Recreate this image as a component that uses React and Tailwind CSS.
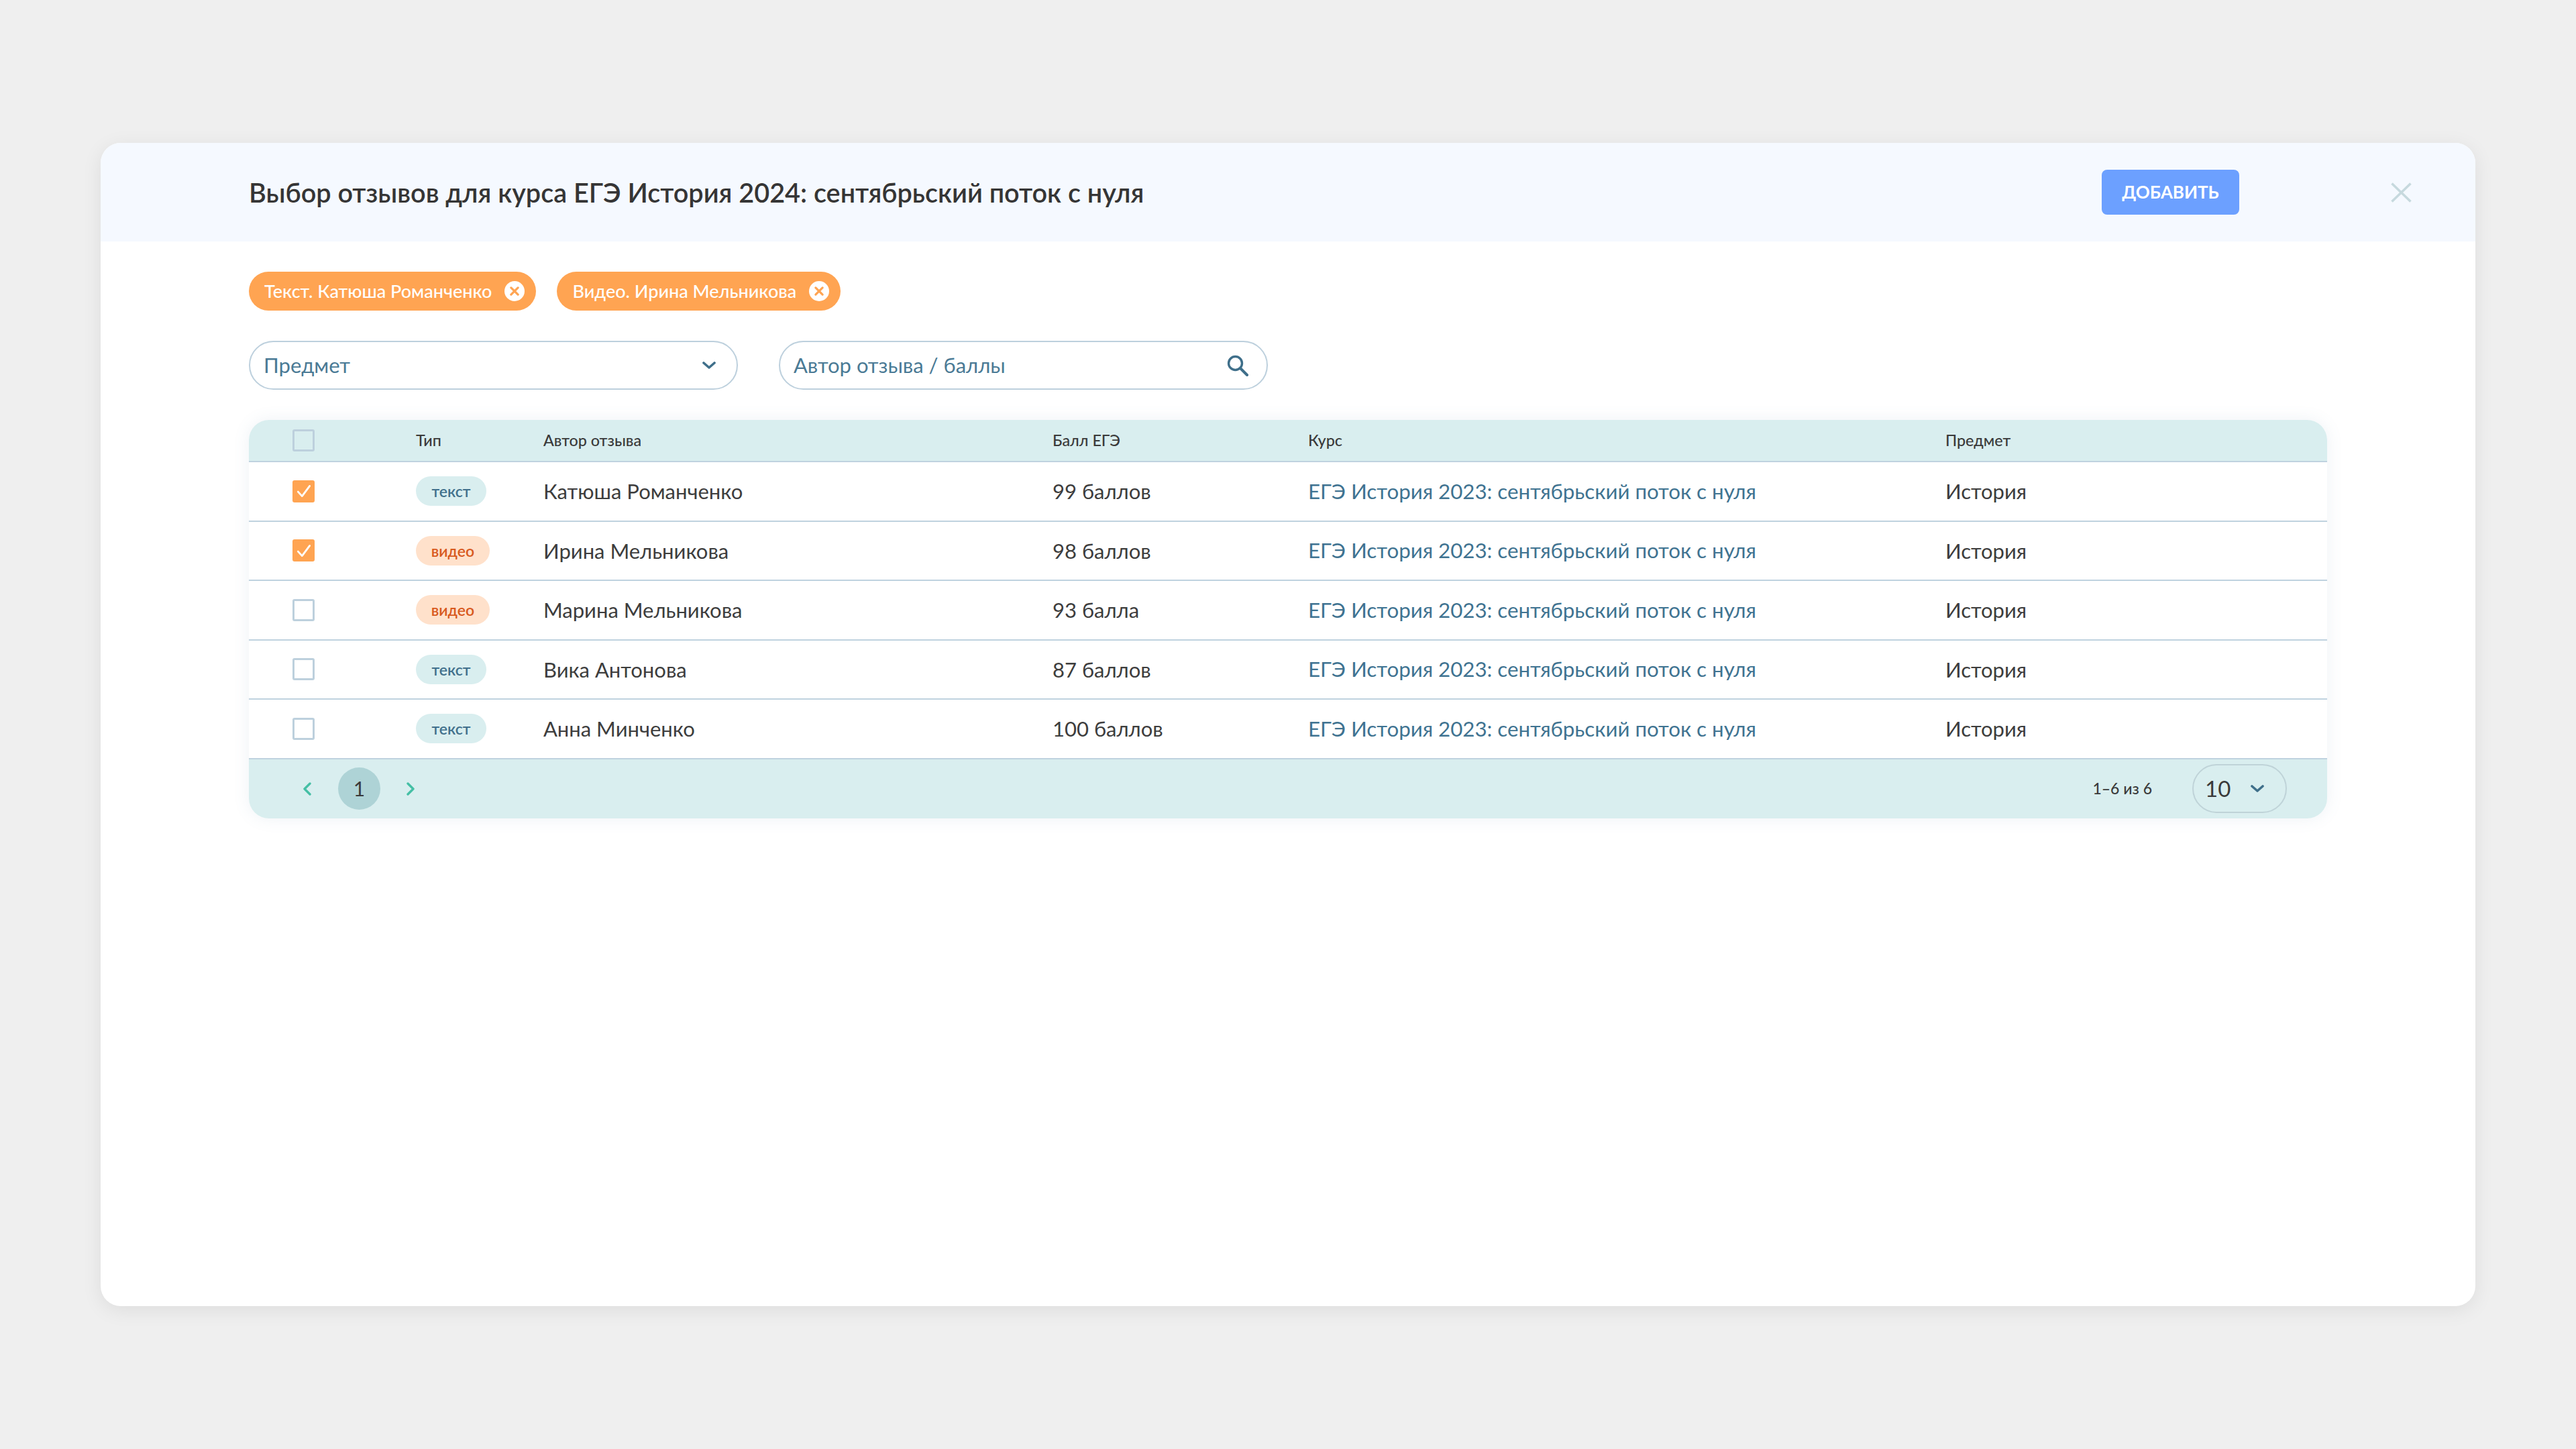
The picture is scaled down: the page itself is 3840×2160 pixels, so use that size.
const rows = [
  { checked: true, type: "текст", author: "Катюша Романченко", score: "99 баллов" },
  { checked: true, type: "видео", author: "Ирина Мельникова", score: "98 баллов" },
  { checked: false, type: "видео", author: "Марина Мельникова", score: "93 балла" },
  { checked: false, type: "текст", author: "Вика Антонова", score: "87 баллов" },
  { checked: false, type: "текст", author: "Анна Минченко", score: "100 баллов" },
];

const courseName = "ЕГЭ История 2023: сентябрьский поток с нуля";

const Chevron = ({ className }) => (
  <svg viewBox="0 0 20 11" fill="none" className={className}>
    <path d="M2 2l8 7 8-7" stroke="currentColor" strokeWidth="3.6" strokeLinecap="round" strokeLinejoin="round" />
  </svg>
);

const Checkbox = ({ checked, header }) => {
  if (checked) {
    return (
      <span className="flex h-[33px] w-[33px] items-center justify-center rounded-[3px] bg-[#ffa452]">
        <svg viewBox="0 0 24 24" fill="none" className="h-[26px] w-[26px]">
          <path d="M4 13l5.5 6L20 5" stroke="#fff" strokeWidth="2.6" strokeLinecap="round" strokeLinejoin="round" />
        </svg>
      </span>
    );
  }
  return (
    <span className={`block h-[33px] w-[33px] rounded-[3px] border-[3px] border-[#bdd0dd] ${header ? "bg-[#d9eeef]" : "bg-white"}`} />
  );
};

const Chip = ({ label }) => (
  <div className="flex h-[58px] items-center rounded-full bg-[#ffa452] pl-[23px] pr-[17px]">
    <span className="text-[27px] font-medium text-white">{label}</span>
    <span className="ml-[19px] flex h-[30px] w-[30px] items-center justify-center rounded-full bg-white">
      <svg viewBox="0 0 14 14" fill="none" className="h-[16px] w-[16px]">
        <path d="M2.5 2.5l9 9M11.5 2.5l-9 9" stroke="#ffa452" strokeWidth="2.8" strokeLinecap="round" />
      </svg>
    </span>
  </div>
);

const Row = ({ row }) => (
  <div className="flex h-[88.5px] items-center border-t-2 border-[#bfd2df] bg-white text-[31px] text-[#3d3d3d]">
    <div className="w-[249px] pl-[65px]">
      <Checkbox checked={row.checked} />
    </div>
    <div className="w-[190px]">
      {row.type === "текст" ? (
        <span className="flex h-[44px] w-[105px] items-center justify-center rounded-full bg-[#d9eeef] text-[23px] font-semibold text-[#41708c]">текст</span>
      ) : (
        <span className="flex h-[44px] w-[110px] items-center justify-center rounded-full bg-[#ffe1cb] text-[23px] font-semibold text-[#d8591e]">видео</span>
      )}
    </div>
    <div className="w-[759px]">{row.author}</div>
    <div className="w-[381px]">{row.score}</div>
    <div className="w-[950px] text-[31.25px] text-[#3f7391]">{courseName}</div>
    <div>История</div>
  </div>
);

export default function App() {
  return (
    <div className="h-[2160px] w-[3840px] bg-[#efefef] pl-[150px] pt-[213px] font-['Lato','Noto_Sans',sans-serif]">
      <div className="h-[1734px] w-[3540px] overflow-hidden rounded-[30px] bg-white shadow-[0_6px_30px_rgba(0,0,0,0.08)]">
        <header className="flex h-[147px] items-center bg-[#f5f9ff] pl-[221px]">
          <h1 className="w-[2762px] text-[39.6px] font-semibold text-[#353535]">
            Выбор отзывов для курса ЕГЭ История 2024: сентябрьский поток с нуля
          </h1>
          <button className="h-[67px] w-[205px] rounded-[8px] bg-[#6ca0ff] text-[26px] font-bold text-white">ДОБАВИТЬ</button>
          <svg viewBox="0 0 31 30" fill="none" className="ml-[226px] h-[30px] w-[31px]">
            <path d="M1.5 1.5l28 27M29.5 1.5l-28 27" stroke="#c6d9de" strokeWidth="3.6" />
          </svg>
        </header>

        <div className="px-[221px]">
          <div className="flex gap-[31px] pt-[45px]">
            <Chip label="Текст. Катюша Романченко" />
            <Chip label="Видео. Ирина Мельникова" />
          </div>

          <div className="mt-[45px] flex gap-[61px]">
            <div className="flex h-[73px] w-[729px] items-center justify-between rounded-full border-2 border-[#bdd0dd] pl-[20px] pr-[31px]">
              <span className="text-[31px] text-[#4a7a95]">Предмет</span>
              <Chevron className="h-[11px] w-[20px] text-[#3f6f8a]" />
            </div>
            <div className="flex h-[73px] w-[729px] items-center justify-between rounded-full border-2 border-[#bdd0dd] pl-[20px] pr-[27px]">
              <span className="text-[31px] text-[#4a7a95]">Автор отзыва / баллы</span>
              <svg viewBox="0 0 32 32" fill="none" className="h-[32px] w-[32px]">
                <circle cx="12.5" cy="12.5" r="10" stroke="#3f6f8a" strokeWidth="3.4" />
                <path d="M20 20l10 10" stroke="#3f6f8a" strokeWidth="4" strokeLinecap="round" />
              </svg>
            </div>
          </div>

          <div className="mt-[45px] rounded-[30px] shadow-[0_0_24px_rgba(90,130,170,0.1)]">
            <div className="flex h-[61px] items-center rounded-t-[30px] bg-[#d9eeef] text-[23.3px] font-medium text-[#3a3a3a]">
              <div className="w-[249px] pl-[65px]">
                <Checkbox header />
              </div>
              <div className="w-[190px]">Тип</div>
              <div className="w-[759px]">Автор отзыва</div>
              <div className="w-[381px]">Балл ЕГЭ</div>
              <div className="w-[950px]">Курс</div>
              <div>Предмет</div>
            </div>

            {rows.map((row) => (
              <Row key={row.author} row={row} />
            ))}

            <div className="flex h-[90px] items-center rounded-b-[30px] border-t-2 border-[#bfd2df] bg-[#d9eeef] pr-[60px]">
              <svg viewBox="0 0 13 20" fill="none" className="ml-[80px] h-[20px] w-[13px]">
                <path d="M11 2L3 10l8 8" stroke="#45bfa5" strokeWidth="3.4" strokeLinecap="round" strokeLinejoin="round" />
              </svg>
              <span className="ml-[40px] flex h-[63px] w-[63px] items-center justify-center rounded-full bg-[#aed3d6] text-[30px] text-[#3a3a3a]">1</span>
              <svg viewBox="0 0 13 20" fill="none" className="ml-[39px] h-[20px] w-[13px]">
                <path d="M2 2l8 8-8 8" stroke="#45bfa5" strokeWidth="3.4" strokeLinecap="round" strokeLinejoin="round" />
              </svg>
              <span className="ml-auto text-[23px] font-medium text-[#3a3a3a]">1–6 из 6</span>
              <div className="ml-[60px] flex h-[73px] w-[141px] items-center rounded-full border-2 border-[#bfd3d8] pl-[17px]">
                <span className="text-[33px] text-[#3a3a3a]">10</span>
                <Chevron className="ml-[30px] h-[11px] w-[20px] text-[#3f6f8a]" />
              </div>
            </div>
          </div>
        </div>
      </div>
    </div>
  );
}
